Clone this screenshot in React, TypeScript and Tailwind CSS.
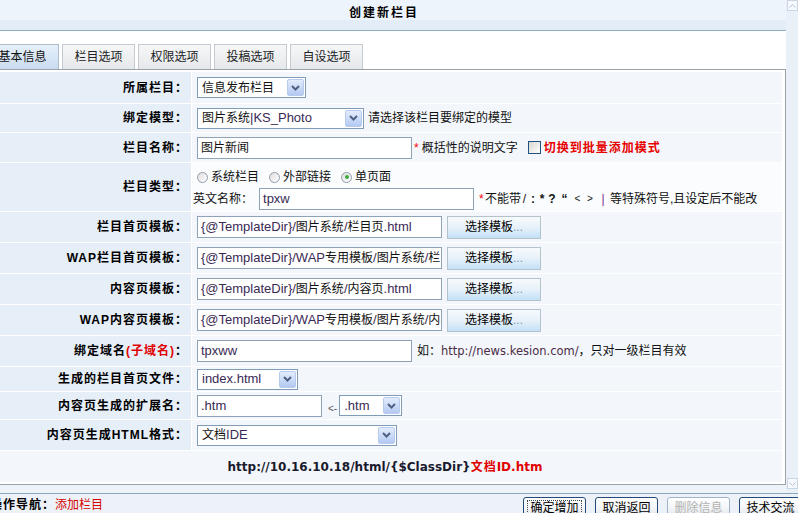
import React from 'react';

const CJK_SPLIT = /([\u2e80-\u9fff\u3000-\u303f\uff00-\uffef]+)/;
const CJK_ONE = /[\u2e80-\u9fff\u3000-\u303f\uff00-\uffef]/;

function Mixed({ text }: { text: string }) {
  return (
    <>
      {text
        .split(CJK_SPLIT)
        .filter((p) => p !== '')
        .map((p, i) =>
          CJK_ONE.test(p) ? (
            <span key={i} className="text-[12px] text-[#111]">
              {p}
            </span>
          ) : (
            <span key={i} className="text-[13px] text-[#3a2a55]">
              {p}
            </span>
          )
        )}
    </>
  );
}

function Chevron() {
  return (
    <svg width="9" height="6" viewBox="0 0 9 6">
      <path d="M1 1 L4.5 4.5 L8 1" fill="none" stroke="#4d6185" strokeWidth="2" />
    </svg>
  );
}

function Select({ text, className }: { text: string; className: string }) {
  return (
    <div className={`flex items-center h-[21px] border border-[#7f9db9] bg-white shrink-0 ${className}`}>
      <span className="flex-1 pl-[4px] whitespace-nowrap overflow-hidden leading-[16px]">
        <Mixed text={text} />
      </span>
      <span className="w-[17px] h-[17px] mr-px flex items-center justify-center rounded-[2px] border border-[#b8cbef] bg-gradient-to-b from-[#e3ecfc] to-[#b4c9f2]">
        <Chevron />
      </span>
    </div>
  );
}

function Input({ text, className }: { text: string; className: string }) {
  return (
    <div
      className={`flex items-center h-[22px] border border-[#8ea3b8] bg-white pl-[3px] overflow-hidden whitespace-nowrap shrink-0 leading-[16px] ${className}`}
    >
      <Mixed text={text} />
    </div>
  );
}

function TplButton() {
  return (
    <div className="ml-[5px] w-[94px] h-[23px] shrink-0 flex items-center justify-center border border-[#b4c2cc] bg-gradient-to-b from-[#f7fafc] via-[#e6f1fa] to-[#c3e1f6] text-[12px] leading-[14px]">
      <span className="text-black">选择模板</span>
      <span className="text-[#8a97a3]">...</span>
    </div>
  );
}

function Row({
  label,
  h,
  children,
  valueClass,
}: {
  label: React.ReactNode;
  h: string;
  children?: React.ReactNode;
  valueClass?: string;
}) {
  return (
    <div className={`grid grid-cols-[191px_590px] gap-x-px ${h}`}>
      <div className="bg-[#e6eef8] flex items-center justify-end pr-[3px] font-bold tracking-[1px] text-[12px] leading-[14px] text-black whitespace-nowrap">
        {label}
      </div>
      <div className={`flex items-center pl-[5px] text-[12px] leading-[14px] text-[#111] whitespace-nowrap ${valueClass ?? 'bg-[#f3f7fc]'}`}>
        {children}
      </div>
    </div>
  );
}

function Radio({ checked, label }: { checked?: boolean; label: string }) {
  return (
    <span className="flex items-center mr-[10px]">
      <span className="w-[11px] h-[11px] rounded-full border border-[#8e9dab] bg-gradient-to-br from-[#dedede] to-white flex items-center justify-center">
        {checked && <span className="w-[4px] h-[4px] rounded-full bg-[#3caa3c]" />}
      </span>
      <span className="ml-[3px]">{label}</span>
    </span>
  );
}

function ArrowBox({ up }: { up?: boolean }) {
  return (
    <div className="ml-px w-[11px] h-[11px] border border-[#c9d5e3] bg-[#f5f8fc] flex items-center justify-center">
      <svg width="7" height="4" viewBox="0 0 7 4">
        <path d={up ? 'M0.5 3.5 L3.5 0.5 L6.5 3.5' : 'M0.5 0.5 L3.5 3.5 L6.5 0.5'} fill="none" stroke="#b9c4d0" strokeWidth="1" />
      </svg>
    </div>
  );
}

function BottomButton({ text, focus, disabled }: { text: string; focus?: boolean; disabled?: boolean }) {
  return (
    <div
      className={`w-[63px] h-[22px] shrink-0 rounded-[3px] border flex items-center justify-center text-[12px] leading-[14px] bg-gradient-to-b from-white via-[#f3f5f7] to-[#dce3eb] ${
        disabled ? 'border-[#9fb3cc] text-[#b2b2b2]' : 'border-[#23497a] text-black'
      }`}
    >
      {focus ? <span className="border border-dotted border-[#444] px-[2px] leading-[14px]">{text}</span> : text}
    </div>
  );
}

const tabs = ['基本信息', '栏目选项', '权限选项', '投稿选项', '自设选项'];

export default function App() {
  return (
    <div className="w-[798px] h-[513px] overflow-hidden flex flex-col bg-white font-['Liberation_Sans','Noto_Sans_CJK_SC',sans-serif] text-[12px] text-black">
      <div className="flex h-[493px] shrink-0">
        <div className="w-[786px] shrink-0 flex flex-col overflow-hidden">
          {/* header */}
          <div className="h-[31px] shrink-0 border-b border-[#8fb0c4] bg-[linear-gradient(to_bottom,#eef4fb_0px,#eef4fb_20px,#e3edf8_20px,#e3edf8_100%)] flex justify-center pt-[6px] pr-[18px]">
            <span className="font-bold tracking-[2px] text-[12px] leading-[14px]">创建新栏目</span>
          </div>
          <div className="h-[13px] shrink-0 bg-white" />
          {/* tabs */}
          <div className="h-[25px] shrink-0 flex gap-[3px] ml-[-14px] bg-white">
            {tabs.map((t, i) => (
              <div
                key={t}
                className={`w-[73px] h-[25px] shrink-0 flex items-center justify-center border border-b-0 text-[12px] leading-[14px] ${
                  i === 0
                    ? 'border-[#aebdcc] bg-gradient-to-b from-[#e6f0fa] to-[#cadcf1] text-[#111]'
                    : 'border-[#c3cad1] bg-gradient-to-b from-[#f7f7f7] to-[#e5e8eb] text-[#222]'
                }`}
              >
                {t}
              </div>
            ))}
          </div>
          {/* table */}
          <div className="shrink-0 border-t border-r border-b border-[#9aa2aa] bg-white pt-[2px] pb-[2px] pr-[3px] flex flex-col gap-px">
            <Row label="所属栏目：" h="h-[31px]">
              <Select text="信息发布栏目" className="w-[109px]" />
            </Row>
            <Row label="绑定模型：" h="h-[28px]">
              <Select text="图片系统|KS_Photo" className="w-[167px]" />
              <span className="ml-[4px]">请选择该栏目要绑定的模型</span>
            </Row>
            <Row label="栏目名称：" h="h-[29px]">
              <Input text="图片新闻" className="w-[215px]" />
              <span className="ml-[2px] text-[#ff0000]">*</span>
              <span className="ml-[3px]">概括性的说明文字</span>
              <span className="ml-[10px] w-[13px] h-[13px] border border-[#1c5180] bg-gradient-to-br from-[#d8d8d2] to-white" />
              <span className="ml-[3px] font-bold tracking-[1px] text-[#e60000]">切换到批量添加模式</span>
            </Row>
            <div className="grid grid-cols-[191px_590px] gap-x-px h-[48px]">
              <div className="bg-[#e6eef8] flex items-center justify-end pr-[3px] font-bold tracking-[1px] text-[12px] leading-[14px] whitespace-nowrap">
                栏目类型：
              </div>
              <div className="bg-[#fafcfe] flex flex-col pt-[7px] text-[12px] leading-[14px] text-[#111] whitespace-nowrap">
                <div className="h-[14px] flex items-center pl-[5px]">
                  <Radio label="系统栏目" />
                  <Radio label="外部链接" />
                  <Radio label="单页面" checked />
                </div>
                <div className="mt-[4px] flex items-center pl-[1px]">
                  <span>英文名称：</span>
                  <Input text="tpxw" className="ml-[6px] w-[215px]" />
                  <span className="ml-[5px] w-[6px] text-[#ff0000]">*</span>
                  <span>不能带</span>
                  <span className="w-[7px] text-center">/</span>
                  <span className="w-[10px] text-center font-bold">:</span>
                  <span className="w-[8px] text-center font-bold">*</span>
                  <span className="w-[12px] text-center font-bold">?</span>
                  <span className="w-[13px] text-center font-bold">“</span>
                  <span className="w-[13px] text-center text-[10px]">&lt;</span>
                  <span className="w-[12px] text-center text-[10px]">&gt;</span>
                  <span className="w-[14px] text-center text-[#7a2a8a]">|</span>
                  <span>等特殊符号,且设定后不能改</span>
                </div>
              </div>
            </div>
            <Row label="栏目首页模板：" h="h-[30px]">
              <Input text="{@TemplateDir}/图片系统/栏目页.html" className="w-[245px]" />
              <TplButton />
            </Row>
            <Row label="WAP栏目首页模板：" h="h-[30px]">
              <Input text="{@TemplateDir}/WAP专用模板/图片系统/栏目页.html" className="w-[245px]" />
              <TplButton />
            </Row>
            <Row label="内容页模板：" h="h-[30px]">
              <Input text="{@TemplateDir}/图片系统/内容页.html" className="w-[245px]" />
              <TplButton />
            </Row>
            <Row label="WAP内容页模板：" h="h-[30px]">
              <Input text="{@TemplateDir}/WAP专用模板/图片系统/内容页.html" className="w-[245px]" />
              <TplButton />
            </Row>
            <Row
              label={
                <>
                  绑定域名<span className="text-[#e00000]">(子域名)</span>：
                </>
              }
              h="h-[30px]"
            >
              <Input text="tpxww" className="w-[215px]" />
              <span className="ml-[5px]">如：</span>
              <span className="font-['DejaVu_Sans',sans-serif] text-[11.5px] text-[#4b2b45]">http://news.kesion.com/</span>
              <span>，只对一级栏目有效</span>
            </Row>
            <Row label="生成的栏目首页文件：" h="h-[24px]">
              <Select text="index.html" className="w-[101px]" />
            </Row>
            <Row label="内容页生成的扩展名：" h="h-[27px]">
              <Input text=".htm" className="w-[125px]" />
              <span className="ml-[6px] mr-[2px] self-end mb-[5px] text-[10px] leading-[10px] text-[#555]">&lt;-</span>
              <Select text=".htm" className="w-[63px]" />
            </Row>
            <Row label="内容页生成HTML格式：" h="h-[30px]">
              <Select text="文档IDE" className="w-[200px]" />
            </Row>
            <div className="h-[31px] bg-[#f3f7fc] flex items-center justify-center pr-[12px] font-bold text-[12px] leading-[14px] whitespace-nowrap">
              <span className="font-['DejaVu_Sans',sans-serif] text-[#1a1a2e]">http://10.16.10.18/html/{'{$ClassDir}'}</span>
              <span className="text-[12px] tracking-[1px] text-[#e00000]">文档</span>
              <span className="font-['DejaVu_Sans',sans-serif] text-[#e00000]">ID.htm</span>
            </div>
          </div>
          <div className="flex-1 bg-[#eef3f9]" />
        </div>
        {/* scrollbar */}
        <div className="w-[12px] shrink-0 bg-[#eaf0f8] flex flex-col justify-between pb-[4px]">
          <ArrowBox up />
          <ArrowBox />
        </div>
      </div>
      {/* bottom bar */}
      <div className="h-[20px] shrink-0 border-t border-[#8ea7b8] bg-[#edf2f8] flex items-start overflow-hidden">
        <div className="w-[533px] shrink-0 ml-[-10px] pt-[4px] text-[12px] leading-[14px] whitespace-nowrap">
          <span className="font-bold tracking-[1px]">操作导航：</span>
          <span className="text-[#d40000]">添加栏目</span>
        </div>
        <div className="flex gap-[9px] pt-[3px] shrink-0">
          <BottomButton text="确定增加" focus />
          <BottomButton text="取消返回" />
          <BottomButton text="删除信息" disabled />
          <BottomButton text="技术交流" />
        </div>
      </div>
    </div>
  );
}
